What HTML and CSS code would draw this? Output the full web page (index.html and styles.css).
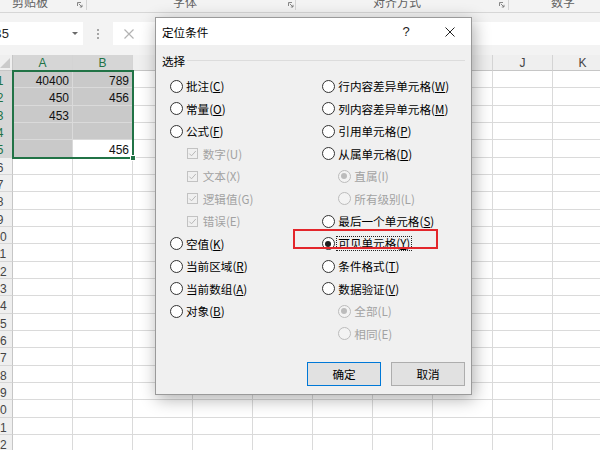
FILE: index.html
```html
<!DOCTYPE html>
<html lang="zh-CN">
<head>
<meta charset="utf-8">
<title>定位条件</title>
<link rel="stylesheet" href="styles.css">
</head>
<body>
<div class="app">
  <div class="ribbon">
    <div class="rgroup g1"><span class="rlabel">剪贴板</span><svg class="launcher" viewBox="0 0 6 6"><path d="M0.5 4V0.5H4M1.8 1.8L5 5M5 2.8V5H2.8" fill="none" stroke="#7a7a7a" stroke-width="0.9"/></svg></div>
    <div class="rgroup g2"><span class="rlabel">字体</span><svg class="launcher" viewBox="0 0 6 6"><path d="M0.5 4V0.5H4M1.8 1.8L5 5M5 2.8V5H2.8" fill="none" stroke="#7a7a7a" stroke-width="0.9"/></svg></div>
    <div class="rgroup g3"><span class="rlabel">对齐方式</span><svg class="launcher" viewBox="0 0 6 6"><path d="M0.5 4V0.5H4M1.8 1.8L5 5M5 2.8V5H2.8" fill="none" stroke="#7a7a7a" stroke-width="0.9"/></svg></div>
    <div class="rgroup g4"><span class="rlabel">数字</span></div>
  </div>

  <div class="fbar">
    <div class="namebox"><span class="nb-text">B5</span><span class="nb-arrow"></span></div>
    <div class="fsep"><i></i><i></i><i></i></div>
    <div class="finput">
      <svg class="fx-x" viewBox="0 0 12 10" width="12" height="10"><path d="M1.5 0.5L10.5 9.5M10.5 0.5L1.5 9.5" stroke="#b3b3b3" stroke-width="1.2" fill="none"/></svg>
    </div>
  </div>

  <div class="sheet">
    <div class="corner"><svg viewBox="0 0 10 10" width="10" height="10"><path d="M10 0V10H0Z" fill="#cbcbcb"/></svg></div>
    <div class="ch sel">A</div><div class="ch sel">B</div><div class="ch">C</div><div class="ch">D</div><div class="ch">E</div><div class="ch">F</div><div class="ch">G</div><div class="ch">H</div><div class="ch">J</div><div class="ch">K</div>

    <div class="rh sel"><span>1</span></div><div class="c s">40400</div><div class="c s">789</div><div class="c"></div><div class="c"></div><div class="c"></div><div class="c"></div><div class="c"></div><div class="c"></div><div class="c"></div><div class="c"></div>
    <div class="rh sel"><span>2</span></div><div class="c s">450</div><div class="c s">456</div><div class="c"></div><div class="c"></div><div class="c"></div><div class="c"></div><div class="c"></div><div class="c"></div><div class="c"></div><div class="c"></div>
    <div class="rh sel"><span>3</span></div><div class="c s">453</div><div class="c s"></div><div class="c"></div><div class="c"></div><div class="c"></div><div class="c"></div><div class="c"></div><div class="c"></div><div class="c"></div><div class="c"></div>
    <div class="rh sel"><span>4</span></div><div class="c s"></div><div class="c s"></div><div class="c"></div><div class="c"></div><div class="c"></div><div class="c"></div><div class="c"></div><div class="c"></div><div class="c"></div><div class="c"></div>
    <div class="rh sel"><span>5</span></div><div class="c s"></div><div class="c">456</div><div class="c"></div><div class="c"></div><div class="c"></div><div class="c"></div><div class="c"></div><div class="c"></div><div class="c"></div><div class="c"></div>
    <div class="rh"><span>6</span></div><div class="c"></div><div class="c"></div><div class="c"></div><div class="c"></div><div class="c"></div><div class="c"></div><div class="c"></div><div class="c"></div><div class="c"></div><div class="c"></div>
    <div class="rh"><span>7</span></div><div class="c"></div><div class="c"></div><div class="c"></div><div class="c"></div><div class="c"></div><div class="c"></div><div class="c"></div><div class="c"></div><div class="c"></div><div class="c"></div>
    <div class="rh"><span>8</span></div><div class="c"></div><div class="c"></div><div class="c"></div><div class="c"></div><div class="c"></div><div class="c"></div><div class="c"></div><div class="c"></div><div class="c"></div><div class="c"></div>
    <div class="rh"><span>9</span></div><div class="c"></div><div class="c"></div><div class="c"></div><div class="c"></div><div class="c"></div><div class="c"></div><div class="c"></div><div class="c"></div><div class="c"></div><div class="c"></div>
    <div class="rh"><span>10</span></div><div class="c"></div><div class="c"></div><div class="c"></div><div class="c"></div><div class="c"></div><div class="c"></div><div class="c"></div><div class="c"></div><div class="c"></div><div class="c"></div>
    <div class="rh"><span>11</span></div><div class="c"></div><div class="c"></div><div class="c"></div><div class="c"></div><div class="c"></div><div class="c"></div><div class="c"></div><div class="c"></div><div class="c"></div><div class="c"></div>
    <div class="rh"><span>12</span></div><div class="c"></div><div class="c"></div><div class="c"></div><div class="c"></div><div class="c"></div><div class="c"></div><div class="c"></div><div class="c"></div><div class="c"></div><div class="c"></div>
    <div class="rh"><span>13</span></div><div class="c"></div><div class="c"></div><div class="c"></div><div class="c"></div><div class="c"></div><div class="c"></div><div class="c"></div><div class="c"></div><div class="c"></div><div class="c"></div>
    <div class="rh"><span>14</span></div><div class="c"></div><div class="c"></div><div class="c"></div><div class="c"></div><div class="c"></div><div class="c"></div><div class="c"></div><div class="c"></div><div class="c"></div><div class="c"></div>
    <div class="rh"><span>15</span></div><div class="c"></div><div class="c"></div><div class="c"></div><div class="c"></div><div class="c"></div><div class="c"></div><div class="c"></div><div class="c"></div><div class="c"></div><div class="c"></div>
    <div class="rh"><span>16</span></div><div class="c"></div><div class="c"></div><div class="c"></div><div class="c"></div><div class="c"></div><div class="c"></div><div class="c"></div><div class="c"></div><div class="c"></div><div class="c"></div>
    <div class="rh"><span>17</span></div><div class="c"></div><div class="c"></div><div class="c"></div><div class="c"></div><div class="c"></div><div class="c"></div><div class="c"></div><div class="c"></div><div class="c"></div><div class="c"></div>
    <div class="rh"><span>18</span></div><div class="c"></div><div class="c"></div><div class="c"></div><div class="c"></div><div class="c"></div><div class="c"></div><div class="c"></div><div class="c"></div><div class="c"></div><div class="c"></div>
    <div class="rh"><span>19</span></div><div class="c"></div><div class="c"></div><div class="c"></div><div class="c"></div><div class="c"></div><div class="c"></div><div class="c"></div><div class="c"></div><div class="c"></div><div class="c"></div>
    <div class="rh"><span>20</span></div><div class="c"></div><div class="c"></div><div class="c"></div><div class="c"></div><div class="c"></div><div class="c"></div><div class="c"></div><div class="c"></div><div class="c"></div><div class="c"></div>
    <div class="rh"><span>21</span></div><div class="c"></div><div class="c"></div><div class="c"></div><div class="c"></div><div class="c"></div><div class="c"></div><div class="c"></div><div class="c"></div><div class="c"></div><div class="c"></div>
    <div class="rh"><span>22</span></div><div class="c"></div><div class="c"></div><div class="c"></div><div class="c"></div><div class="c"></div><div class="c"></div><div class="c"></div><div class="c"></div><div class="c"></div><div class="c"></div>

    <div class="selbox"><div class="handle"></div></div>
  </div>

  <div class="dialog">
    <div class="titlebar">
      <span class="title">定位条件</span>
      <span class="help">?</span>
      <span class="close"><svg viewBox="0 0 10 10" width="10" height="10"><path d="M0.5 0.5L9.5 9.5M9.5 0.5L0.5 9.5" stroke="#222" stroke-width="1" fill="none"/></svg></span>
    </div>
    <div class="dbody">
      <div class="ghead"><span>选择</span><span class="line"></span></div>
      <div class="options">
        <div class="col">
          <div class="opt"><span class="radio"></span><span>批注(<u>C</u>)</span></div>
          <div class="opt"><span class="radio"></span><span>常量(<u>O</u>)</span></div>
          <div class="opt"><span class="radio"></span><span>公式(<u>F</u>)</span></div>
          <div class="opt cbx dis"><span class="check"><svg viewBox="0 0 9 9" width="9" height="9"><path d="M1.3 4.6L3.5 6.8L7.8 2" stroke="#b9b9b9" stroke-width="1" fill="none"/></svg></span><span>数字(U)</span></div>
          <div class="opt cbx dis"><span class="check"><svg viewBox="0 0 9 9" width="9" height="9"><path d="M1.3 4.6L3.5 6.8L7.8 2" stroke="#b9b9b9" stroke-width="1" fill="none"/></svg></span><span>文本(X)</span></div>
          <div class="opt cbx dis"><span class="check"><svg viewBox="0 0 9 9" width="9" height="9"><path d="M1.3 4.6L3.5 6.8L7.8 2" stroke="#b9b9b9" stroke-width="1" fill="none"/></svg></span><span>逻辑值(G)</span></div>
          <div class="opt cbx dis"><span class="check"><svg viewBox="0 0 9 9" width="9" height="9"><path d="M1.3 4.6L3.5 6.8L7.8 2" stroke="#b9b9b9" stroke-width="1" fill="none"/></svg></span><span>错误(E)</span></div>
          <div class="opt"><span class="radio"></span><span>空值(<u>K</u>)</span></div>
          <div class="opt"><span class="radio"></span><span>当前区域(<u>R</u>)</span></div>
          <div class="opt"><span class="radio"></span><span>当前数组(<u>A</u>)</span></div>
          <div class="opt"><span class="radio"></span><span>对象(<u>B</u>)</span></div>
        </div>
        <div class="col">
          <div class="opt"><span class="radio"></span><span>行内容差异单元格(<u>W</u>)</span></div>
          <div class="opt"><span class="radio"></span><span>列内容差异单元格(<u>M</u>)</span></div>
          <div class="opt"><span class="radio"></span><span>引用单元格(<u>P</u>)</span></div>
          <div class="opt"><span class="radio"></span><span>从属单元格(<u>D</u>)</span></div>
          <div class="opt ind dis"><span class="radio on"></span><span>直属(I)</span></div>
          <div class="opt ind dis"><span class="radio"></span><span>所有级别(L)</span></div>
          <div class="opt"><span class="radio"></span><span>最后一个单元格(<u>S</u>)</span></div>
          <div class="opt"><span class="radio on"></span><span class="focus">可见单元格(<u>Y</u>)</span></div>
          <div class="opt"><span class="radio"></span><span>条件格式(<u>T</u>)</span></div>
          <div class="opt"><span class="radio"></span><span>数据验证(<u>V</u>)</span></div>
          <div class="opt ind dis"><span class="radio on"></span><span>全部(L)</span></div>
          <div class="opt ind dis"><span class="radio"></span><span>相同(E)</span></div>
        </div>
      </div>
      <div class="dfoot">
        <div class="btn def">确定</div>
        <div class="btn">取消</div>
      </div>
    </div>
    <div class="redbox"></div>
  </div>
</div>
</body>
</html>
```

FILE: styles.css
```css
* { box-sizing: border-box; }
html, body { margin: 0; padding: 0; }
body {
  width: 600px;
  height: 450px;
  overflow: hidden;
  background: #ffffff;
  font-family: "Noto Sans CJK SC", "Noto Sans", sans-serif;
}
.app {
  position: relative;
  width: 600px;
  height: 450px;
  overflow: hidden;
  background: #ffffff;
}

/* ribbon */
.ribbon {
  height: 13px;
  background: #f3f3f3;
  border-bottom: 1px solid #d6d6d6;
  display: flex;
  align-items: flex-start;
  overflow: hidden;
}
.rgroup {
  height: 10px;
  display: flex;
  align-items: flex-start;
  justify-content: space-between;
  border-right: 1px solid #d4d4d4;
  flex: none;
}
.rlabel {
  font-size: 12px;
  line-height: 12px;
  color: #616161;
  margin-top: -4px;
  white-space: nowrap;
}
.launcher { width: 6px; height: 6px; margin-top: 2px; display: block; }
.g1 { width: 87px; padding-left: 12px; padding-right: 3px; }
.g2 { width: 209px; padding-left: 86px; padding-right: 1px; }
.g3 { width: 213px; padding-left: 77px; padding-right: 3px; }
.g4 { flex: 1; padding-left: 42px; border-right: none; }

/* formula bar */
.fbar {
  height: 42px;
  background: #f3f3f3;
  display: flex;
  align-items: flex-start;
  padding-top: 9px;
}
.namebox {
  width: 83px;
  height: 23px;
  background: #ffffff;
  display: flex;
  align-items: center;
  justify-content: space-between;
  padding-right: 5px;
  overflow: hidden;
  flex: none;
}
.nb-text {
  font: 13px "Liberation Sans", sans-serif;
  color: #262626;
  margin-left: -7px;
}
.nb-arrow {
  width: 0;
  height: 0;
  border-left: 3px solid transparent;
  border-right: 3px solid transparent;
  border-top: 3px solid #6a6a6a;
}
.fsep {
  width: 30px;
  height: 23px;
  display: flex;
  flex-direction: column;
  align-items: center;
  justify-content: center;
  gap: 2px;
  flex: none;
}
.fsep i { display: block; width: 2px; height: 2px; background: #a6a6a6; }
.finput {
  flex: 1;
  height: 23px;
  background: #ffffff;
  display: flex;
  align-items: center;
  padding-left: 10px;
}

/* sheet */
.sheet {
  position: relative;
  display: grid;
  grid-template-columns: 13px repeat(10, 60px);
  grid-template-rows: 16px repeat(22, 17.333px);
}
.corner {
  background: #efefef;
  border-right: 1px solid #c6c6c6;
  border-bottom: 1px solid #c6c6c6;
  display: flex;
  align-items: flex-end;
  justify-content: flex-end;
  padding: 0 2px 2px 0;
}
.corner svg { display: block; }
.ch {
  background: #efefef;
  border-right: 1px solid #d4d4d4;
  border-bottom: 1px solid #c6c6c6;
  display: flex;
  align-items: center;
  justify-content: center;
  padding-top: 1px;
  font: 12px "Liberation Sans", sans-serif;
  color: #444444;
}
.ch.sel { background: #d6d6d6; color: #217346; }
.rh {
  background: #efefef;
  border-right: 1px solid #c6c6c6;
  border-bottom: 1px solid #d6d6d6;
  overflow: hidden;
  font: 12px "Liberation Sans", sans-serif;
  color: #444444;
}
.rh span {
  display: block;
  width: 26px;
  margin-left: -13px;
  text-align: center;
  line-height: 16px;
  padding-top: 2px;
}
.rh.sel { background: #d6d6d6; color: #217346; }
.c {
  border-right: 1px solid #dadada;
  border-bottom: 1px solid #dadada;
  font: 12px "Liberation Sans", sans-serif;
  line-height: 16px;
  padding: 2px 3px 0 0;
  text-align: right;
  color: #111111;
  overflow: hidden;
  white-space: nowrap;
}
.c.s { background: #c9c9c9; }
.selbox {
  position: absolute;
  left: 12px;
  top: 15px;
  width: 122px;
  height: 89px;
  border: 2px solid #217346;
  pointer-events: none;
}
.handle {
  position: absolute;
  right: -4px;
  bottom: -4px;
  width: 6px;
  height: 6px;
  background: #217346;
  border: 1px solid #ffffff;
}

/* dialog */
.dialog {
  position: absolute;
  left: 155px;
  top: 17px;
  width: 317px;
  height: 378px;
  background: #f0f0f0;
  border: 1px solid #9a9a9a;
  box-shadow: 2px 4px 16px rgba(0, 0, 0, 0.32);
  display: flex;
  flex-direction: column;
  font-size: 11.6px;
  color: #000000;
}
.titlebar {
  height: 27px;
  background: #ffffff;
  display: flex;
  align-items: center;
  padding-left: 6px;
  flex: none;
}
.title { flex: 1; }
.help {
  width: 30px;
  text-align: center;
  font: 13px "Liberation Sans", sans-serif;
  margin-right: 7px;
  color: #222;
}
.close { width: 43px; display: flex; justify-content: center; align-items: center; }
.close svg { display: block; }
.dbody {
  flex: 1;
  display: flex;
  flex-direction: column;
  padding: 0 6px 8px 6px;
}
.ghead {
  height: 29.75px;
  padding-top: 3px;
  display: flex;
  align-items: center;
  flex: none;
}
.ghead .line {
  flex: 1;
  height: 1px;
  background: #dcdcdc;
  margin-left: 2px;
  margin-top: -1px;
}
.options {
  display: grid;
  grid-template-columns: 152.3px 1fr;
  padding-left: 7.5px;
}
.col { display: flex; flex-direction: column; }
.opt {
  height: 22.5px;
  display: flex;
  align-items: center;
  white-space: nowrap;
}
.opt u { text-decoration: underline; text-underline-offset: 1px; }
.radio {
  width: 13px;
  height: 13px;
  border: 1px solid #333333;
  border-radius: 50%;
  background: #ffffff;
  margin-right: 3.5px;
  flex: none;
  display: flex;
  align-items: center;
  justify-content: center;
}
.radio.on::after {
  content: "";
  width: 6px;
  height: 6px;
  border-radius: 50%;
  background: #1e1e1e;
}
.opt.dis { color: #a2a2a2; }
.opt.dis .radio { border-color: #bcbcbc; background: #f3f3f3; }
.opt.dis .radio.on::after { background: #bcbcbc; }
.opt.ind { padding-left: 16px; }
.opt.cbx { padding-left: 17.5px; }
.check {
  width: 11px;
  height: 11px;
  border: 1px solid #c2c2c2;
  margin-right: 4.7px;
  display: flex;
  align-items: center;
  justify-content: center;
  flex: none;
}
.check svg { display: block; }
.focus {
  display: inline-block;
  line-height: 13px;
  outline: 1px dotted #222222;
  padding: 0 1px;
  margin-left: -1px;
}
.dfoot {
  margin-top: auto;
  display: flex;
  justify-content: flex-end;
  gap: 10px;
}
.btn {
  width: 74px;
  height: 24px;
  border: 1px solid #adadad;
  background: #e1e1e1;
  display: flex;
  align-items: center;
  justify-content: center;
}
.btn.def { border-color: #0078d7; }
.redbox {
  position: absolute;
  left: 137px;
  top: 211px;
  width: 145px;
  height: 20px;
  border: 2px solid #e3262b;
  pointer-events: none;
}
```
